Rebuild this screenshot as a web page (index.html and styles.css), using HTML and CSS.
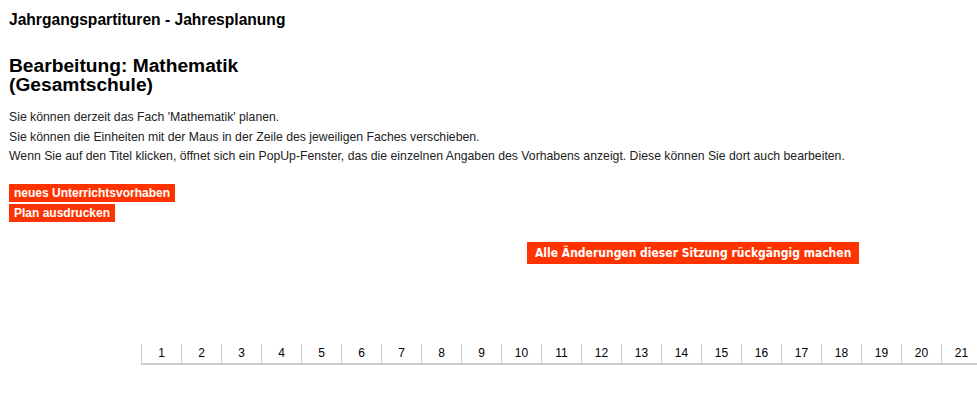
FILE: index.html
```html
<!DOCTYPE html>
<html lang="de">
<head>
<meta charset="utf-8">
<title>Jahrgangspartituren - Jahresplanung</title>
<link rel="stylesheet" href="styles.css">
</head>
<body>
<h1 class="title">Jahrgangspartituren - Jahresplanung</h1>
<h2 class="subject">Bearbeitung: Mathematik<br>(Gesamtschule)</h2>
<div class="info">
  <p>Sie können derzeit das Fach 'Mathematik' planen.</p>
  <p>Sie können die Einheiten mit der Maus in der Zeile des jeweiligen Faches verschieben.</p>
  <p>Wenn Sie auf den Titel klicken, öffnet sich ein PopUp-Fenster, das die einzelnen Angaben des Vorhabens anzeigt. Diese können Sie dort auch bearbeiten.</p>
</div>
<div class="actions">
  <a class="btn" href="#">neues Unterrichtsvorhaben</a>
  <a class="btn" href="#">Plan ausdrucken</a>
</div>
<div class="undo-row">
  <a class="btn-undo" href="#">Alle Änderungen dieser Sitzung rückgängig machen</a>
</div>
<div class="weeks-wrap">
  <div class="weeks">
    <div class="week">1</div><div class="week">2</div><div class="week">3</div><div class="week">4</div><div class="week">5</div><div class="week">6</div><div class="week">7</div><div class="week">8</div><div class="week">9</div><div class="week">10</div><div class="week">11</div><div class="week">12</div><div class="week">13</div><div class="week">14</div><div class="week">15</div><div class="week">16</div><div class="week">17</div><div class="week">18</div><div class="week">19</div><div class="week">20</div><div class="week">21</div>
  </div>
</div>
</body>
</html>
```
FILE: styles.css
```css
html, body {
  margin: 0;
  padding: 0;
  background: #fff;
}
body {
  padding: 10px 0 0 9px;
  font-family: "Liberation Sans", Arial, sans-serif;
  color: #000;
  overflow: hidden;
}
.title {
  font-size: 15.6px;
  font-weight: bold;
  line-height: 20px;
  margin: 0 0 26px 0;
}
.subject {
  font-size: 19.2px;
  font-weight: bold;
  line-height: 19px;
  margin: 0 0 14px 0;
}
.info {
  font-size: 12.25px;
  color: #222;
}
.info p {
  margin: 0;
  line-height: 19.5px;
}
.actions {
  margin-top: 17px;
  display: flex;
  flex-direction: column;
  align-items: flex-start;
  gap: 2px;
}
.btn {
  display: block;
  background: #ff3300;
  color: #fff;
  font-size: 12px;
  font-weight: bold;
  line-height: 18px;
  padding: 0 5px;
  text-decoration: none;
}
.undo-row {
  margin-top: 20px;
  padding-left: 518px;
}
.btn-undo {
  display: inline-block;
  background: #ff3300;
  color: #fff;
  font-family: "DejaVu Sans Condensed", "DejaVu Sans", Verdana, sans-serif;
  font-stretch: condensed;
  font-size: 12px;
  font-weight: bold;
  line-height: 22px;
  padding: 0 8px;
  text-decoration: none;
}
.weeks-wrap {
  margin-top: 80px;
  margin-left: 132px;
  overflow: hidden;
}
.weeks {
  display: flex;
  border-bottom: 2px solid #ccc;
  width: max-content;
}
.week {
  width: 39px;
  height: 19px;
  border-left: 1px solid #ccc;
  font-size: 12px;
  line-height: 19px;
  text-align: center;
}
```
